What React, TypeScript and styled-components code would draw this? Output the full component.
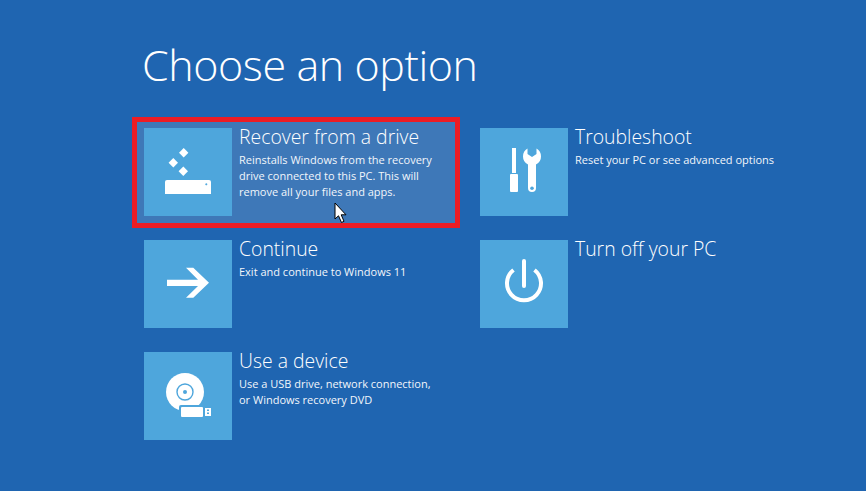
import React from "react";
import styled, { createGlobalStyle } from "styled-components";

const Global = createGlobalStyle`
  html, body { margin: 0; padding: 0; width: 866px; height: 491px; overflow: hidden; background: #1f65b1; }
  #root { width: 866px; height: 491px; }
`;

const Page = styled.main`
  width: 866px;
  height: 491px;
  box-sizing: border-box;
  padding: 36px 0 0 144px;
  background: #1f65b1;
  color: #fff;
  font-family: "Open Sans", "Noto Sans", sans-serif;
  position: relative;
`;

const Heading = styled.h1`
  margin: 0 0 30px -2px;
  height: 62px;
  font-size: 43px;
  line-height: 58px;
  font-weight: 300;
  letter-spacing: -0.42px;
`;

const Grid = styled.div`
  display: grid;
  grid-template-columns: 336px 336px;
  grid-auto-rows: 88px;
  row-gap: 24px;
`;

const Option = styled.div<{ $active?: boolean }>`
  display: flex;
  gap: 7px;
  position: relative;
  z-index: 0;
  ${(p) =>
    p.$active &&
    `
    &::before {
      content: "";
      position: absolute;
      left: -12px;
      top: -11px;
      width: 328px;
      height: 111px;
      box-sizing: border-box;
      border: 5px solid #ed1c24;
      background: #3e78b8;
      z-index: -1;
    }
  `}
`;

const Tile = styled.div`
  width: 88px;
  height: 88px;
  flex: none;
  background: #4ea6dc;
  svg { display: block; }
`;

const Body = styled.div`
  width: 230px;
`;

const Title = styled.div`
  font-size: 19.4px;
  line-height: 18px;
  font-weight: 300;
  white-space: nowrap;
`;

const Desc = styled.div`
  font-size: 11px;
  line-height: 16px;
  margin-top: 6px;
  font-weight: 400;
  white-space: pre-line;
  color: #f2f6fb;
`;

const Cursor = styled.svg`
  position: absolute;
  left: 334px;
  top: 202px;
`;

const BLUE = "#4ea6dc";

const DriveIcon = () => (
  <svg width="88" height="88" viewBox="0 0 88 88" fill="#fff">
    <path d="M39.7 20 L44.4 24.7 L39.7 29.4 L35 24.7Z" />
    <path d="M29.3 30 L34 34.7 L29.3 39.4 L24.6 34.7Z" />
    <path d="M39.3 38.6 L44 43.3 L39.3 48 L34.6 43.3Z" />
    <path d="M23 52 H65 Q67 52 67 54 V66 H21 V54 Q21 52 23 52Z" />
    <path d="M61.3 56.3 h2 M62.3 55.3 v2" stroke={BLUE} strokeWidth="1" />
  </svg>
);

const ToolsIcon = () => (
  <svg width="88" height="88" viewBox="0 0 88 88" fill="#fff">
    <path d="M32 20 H36 V45 H32Z" />
    <path d="M31 46 H37 Q38 46 38 47 V63 Q38 64 37 64 H31 Q30 64 30 63 V47 Q30 46 31 46Z" />
    <path d="M47.500 20.500 V26 L52 29 L56.500 26 V20.500 Q61 23 61 28.500 Q61 34 56 36.500 V60 A4 4 0 0 1 48 60 V36.500 Q43 34 43 28.500 Q43 23 47.500 20.500Z" />
    <circle cx="52" cy="60.300" r="1.800" fill={BLUE} />
  </svg>
);

const ArrowIcon = () => (
  <svg width="88" height="88" viewBox="0 0 88 88" fill="#fff">
    <path d="M23 39.700 H54 L42 27.700 H49.300 L65 42.700 L49.300 57.700 H42 L54 46 H23Z" />
  </svg>
);

const PowerIcon = () => (
  <svg width="88" height="88" viewBox="0 0 88 88" fill="none" stroke="#fff">
    <path d="M33.500 30 A17 17 0 1 0 54.500 30" strokeWidth="4" />
    <path d="M44 21 V46" strokeWidth="4" strokeLinecap="round" />
  </svg>
);

const DeviceIcon = () => (
  <svg width="88" height="88" viewBox="0 0 88 88" fill="#fff">
    <circle cx="41" cy="40" r="19" />
    <circle cx="41" cy="40" r="8" fill="none" stroke={BLUE} strokeWidth="1.400" />
    <circle cx="41" cy="40" r="2" fill={BLUE} />
    <rect x="35" y="53" width="26" height="14" rx="2" fill={BLUE} />
    <rect x="37" y="55" width="22" height="10" rx="1" />
    <rect x="61" y="56" width="6" height="8" />
    <rect x="63" y="57.500" width="2" height="1.500" fill={BLUE} />
    <rect x="63" y="60.500" width="2" height="1.500" fill={BLUE} />
  </svg>
);

const options = [
  { id: "recover", title: "Recover from a drive", desc: "Reinstalls Windows from the recovery\ndrive connected to this PC. This will\nremove all your files and apps.", icon: <DriveIcon />, active: true },
  { id: "trouble", title: "Troubleshoot", desc: "Reset your PC or see advanced options", icon: <ToolsIcon /> },
  { id: "continue", title: "Continue", desc: "Exit and continue to Windows 11", icon: <ArrowIcon /> },
  { id: "off", title: "Turn off your PC", desc: "", icon: <PowerIcon /> },
  { id: "device", title: "Use a device", desc: "Use a USB drive, network connection,\nor Windows recovery DVD", icon: <DeviceIcon /> },
];

export default function App() {
  return (
    <Page>
      <Global />
      <Heading>Choose an option</Heading>
      <Grid>
        {options.map((o) => (
          <Option key={o.id} $active={o.active}>
            <Tile>{o.icon}</Tile>
            <Body>
              <Title>{o.title}</Title>
              {o.desc && <Desc>{o.desc}</Desc>}
            </Body>
          </Option>
        ))}
      </Grid>
      <Cursor width="14" height="22" viewBox="0 0 14 22">
        <path d="M1 1 V17 L4.500 13.800 L7.500 20.500 L10 19.300 L7.200 12.800 L12 12.800Z" fill="#fff" stroke="#000" strokeWidth="1" />
      </Cursor>
    </Page>
  );
}
